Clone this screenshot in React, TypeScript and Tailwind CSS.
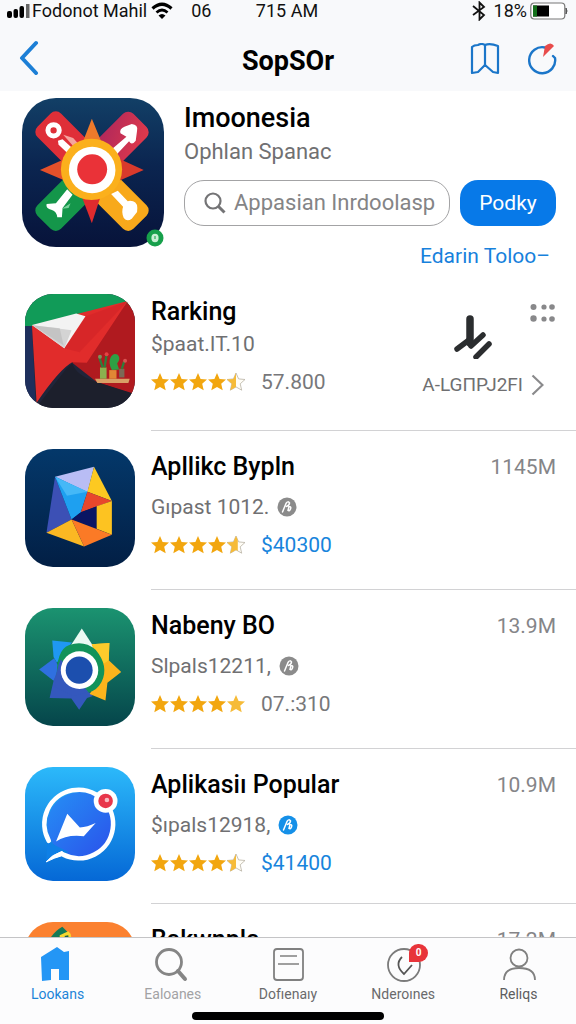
import { useId, useState } from "react";
import type { ReactNode } from "react";
import clsx from "clsx";

type AppEntry = {
  name: string;
  subtitle?: string;
  stars?: number;
  price?: string;
  priceLink?: boolean;
  size?: string;
  badge?: "gray" | "blue";
  tall?: boolean;
  compact?: boolean;
  icon: ReactNode;
};

function HeroIcon() {
  return (
    <svg viewBox="36 24 427 447" preserveAspectRatio="none" className="h-full w-full" aria-hidden="true">
      <defs>
        <linearGradient id="heroBg" x1="0" y1="0" x2="0" y2="1">
          <stop offset="0" stopColor="#123f66" />
          <stop offset="0.45" stopColor="#0b2550" />
          <stop offset="1" stopColor="#07133a" />
        </linearGradient>
        <linearGradient id="heroPink" x1="1" y1="0" x2="0" y2="1">
          <stop offset="0" stopColor="#e23a4a" />
          <stop offset="1" stopColor="#a5245f" />
        </linearGradient>
      </defs>
      <rect x="36" y="24" width="427" height="447" fill="url(#heroBg)" />
      <rect x="-50" y="-100" width="100" height="200" rx="22" transform="translate(173 161) rotate(-45)" fill="#df2f38" />
      <rect x="-50" y="-100" width="100" height="200" rx="22" transform="translate(320 162) rotate(45)" fill="url(#heroPink)" />
      <rect x="-50" y="-100" width="100" height="200" rx="22" transform="translate(173 326) rotate(45)" fill="#14964a" />
      <rect x="-50" y="-100" width="100" height="200" rx="22" transform="translate(320 326) rotate(-45)" fill="#f8a91b" />
      <path d="M246 86L218 158H276Z" fill="#ee7a2b" />
      <path d="M90 240L166 206V272Z" fill="#e4502a" />
      <path d="M402 240L328 206V272Z" fill="#d93a2c" />
      <path d="M246 400L216 320H272Z" fill="#df2b2e" />
      <path d="M144 152L158 148L200 186L186 202L146 164Z" fill="#fff" />
      <path d="M160 134L190 144L214 172L202 182Z" fill="#f5a59f" />
      <circle cx="131" cy="121" r="17" fill="none" stroke="#fff" strokeWidth="15" />
      <path d="M306 178L350 140L332 130Q328 116 344 110L366 102Q386 104 382 122L378 152Q366 168 358 154L322 192Z" fill="#fff" />
      <path d="M172 298L138 340L110 342Q106 356 126 360Q140 364 142 382L156 382L158 354L188 314Z" fill="#fff" />
      <path d="M156 356L182 340L176 354Z" fill="#7cd39d" />
      <path d="M304 312L340 350Q334 366 342 384Q352 396 366 386L382 366Q386 338 370 334Q360 330 354 334L324 302Z" fill="#fff" />
      <circle cx="245" cy="238" r="92" fill="#fbb01c" />
      <circle cx="247" cy="240" r="70" fill="#fff" />
      <circle cx="247" cy="238" r="45" fill="#ea3238" />
    </svg>
  );
}

function FlagIcon() {
  return (
    <svg viewBox="45 25 333 343" preserveAspectRatio="none" className="h-full w-full" aria-hidden="true">
      <rect x="45" y="25" width="333" height="343" fill="#20253a" />
      <path d="M45 25H378V60L66 122H45Z" fill="#119b58" />
      <path d="M45 122H66L78 368H45Z" fill="#1e2f5c" />
      <path d="M356 48L378 58V328L262 290L188 232L240 180Z" fill="#b01a1f" />
      <path d="M188 234Q200 270 262 290L378 326V368H78L170 250Z" fill="#1c1f2c" />
      <path d="M66 120L356 46Q300 130 232 232L188 230Q150 250 80 352Z" fill="#e12c2b" />
      <path d="M230 92L356 46L210 200L164 188Z" fill="#cf2326" opacity="0.55" />
      <path d="M66 118L200 84L228 92L164 188Z" fill="#f3f3f3" />
      <path d="M66 118L186 134L164 188Z" fill="#d4d4d4" />
      <path d="M70 120L150 128L162 180Z" fill="#bdbdbd" opacity="0.7" />
      <path d="M257 280H362L358 293H264Z" fill="#d9a066" />
      <rect x="272" y="246" width="20" height="34" fill="#8bb04e" />
      <rect x="300" y="254" width="22" height="26" fill="#e08735" />
      <rect x="330" y="250" width="16" height="26" fill="#7b6a55" />
      <path d="M280 246L270 216M286 246L292 206M338 250L346 226" stroke="#2f7d3b" strokeWidth="7" />
      <path d="M308 254Q296 232 304 216Q312 200 326 208Q336 220 324 234L330 252Z" fill="#2fa044" />
      <circle cx="292" cy="206" r="6" fill="#e44343" />
      <circle cx="348" cy="226" r="6" fill="#d95151" />
      <circle cx="272" cy="214" r="6" fill="#7d915b" />
    </svg>
  );
}

function PrismIcon() {
  return (
    <svg viewBox="45 22 333 358" preserveAspectRatio="none" className="h-full w-full" aria-hidden="true">
      <defs>
        <linearGradient id="prismBg" x1="0" y1="0" x2="0" y2="1">
          <stop offset="0" stopColor="#04386a" />
          <stop offset="1" stopColor="#021f45" />
        </linearGradient>
      </defs>
      <rect x="45" y="22" width="333" height="358" fill="url(#prismBg)" />
      <path d="M136 106L110 276L186 236Z" fill="#3c50b5" />
      <path d="M136 106L254 76L234 154Z" fill="#b9bdf5" />
      <path d="M136 106L234 152L214 214L186 236Z" fill="#1ea0f0" />
      <path d="M136 106L234 152L172 164Z" fill="#45b8f7" />
      <path d="M254 76L308 180L234 152Z" fill="#fdc921" />
      <path d="M234 152L308 180L214 214Z" fill="#e8472c" />
      <path d="M214 214L262 196V264L186 236Z" fill="#0a1563" />
      <path d="M262 196L308 180V282L262 264Z" fill="#fdc321" />
      <path d="M110 276L186 236L224 318Z" fill="#fbb823" />
      <path d="M186 236L308 282L224 318Z" fill="#fb7a26" />
    </svg>
  );
}

function SunIcon() {
  return (
    <svg viewBox="43 24 335 357" preserveAspectRatio="none" className="h-full w-full" aria-hidden="true">
      <defs>
        <linearGradient id="sunBg" x1="0" y1="0" x2="0" y2="1">
          <stop offset="0" stopColor="#1b9370" />
          <stop offset="1" stopColor="#05454b" />
        </linearGradient>
      </defs>
      <rect x="43" y="24" width="335" height="357" fill="url(#sunBg)" />
      <path d="M216 86L178 144H254Z" fill="#eafaf3" />
      <path d="M126 122L186 128L140 190L130 172Z" fill="#1f98f2" />
      <path d="M132 176L86 210L130 244L150 210Z" fill="#2f70e0" />
      <path d="M130 244L150 190L250 290L232 296L208 332L184 298L118 296Z" fill="#3458bd" />
      <path d="M246 134L300 130L298 182L336 218L294 250L288 304L240 284L278 220Z" fill="#fbb41c" />
      <path d="M246 134L300 130L298 182L284 192Z" fill="#fccb2c" />
      <path d="M140 244Q136 150 178 136Q222 120 258 150Q300 200 276 248Q262 274 236 280L160 250Z" fill="#12935a" />
      <path d="M134 262Q140 200 152 180L236 278L190 290Z" fill="#3458bd" />
      <circle cx="209" cy="212" r="57" fill="#fff" />
      <circle cx="208" cy="212" r="41" fill="#1c4fae" />
    </svg>
  );
}

function MessengerIcon() {
  return (
    <svg viewBox="44 22 333 346" preserveAspectRatio="none" className="h-full w-full" aria-hidden="true">
      <defs>
        <linearGradient id="msgBg" x1="0" y1="0" x2="0" y2="1">
          <stop offset="0" stopColor="#2cb9fa" />
          <stop offset="1" stopColor="#0568d6" />
        </linearGradient>
        <linearGradient id="msgDisc" x1="0" y1="0" x2="1" y2="1">
          <stop offset="0" stopColor="#2590f5" />
          <stop offset="1" stopColor="#2b50ea" />
        </linearGradient>
      </defs>
      <rect x="44" y="22" width="333" height="346" fill="url(#msgBg)" />
      <circle cx="211" cy="198" r="100" fill="url(#msgDisc)" />
      <path d="M112 248L176 280L108 310Z" fill="#0f80e6" />
      <path d="M116 246A104 104 0 1 1 160 288" fill="none" stroke="#fff" strokeWidth="14" strokeLinecap="round" />
      <path d="M108 310Q126 288 156 278L166 288Q130 298 108 310Z" fill="#fff" stroke="#fff" strokeWidth="3" />
      <path d="M172 164L210 206Q232 204 258 192L222 232Q170 226 138 248Z" fill="#fff" />
      <circle cx="288" cy="125" r="36" fill="#fff" />
      <circle cx="288" cy="125" r="22" fill="#e8364b" />
      <circle cx="292" cy="122" r="7" fill="#f9b9c0" />
    </svg>
  );
}

function OrangeIcon() {
  return (
    <svg viewBox="75 66 333 343" preserveAspectRatio="none" className="h-full w-full" aria-hidden="true">
      <rect x="75" y="66" width="333" height="343" fill="#fb8130" />
      <path d="M152 114Q166 92 188 80L206 98L180 130H150Z" fill="#147a55" />
      <path d="M180 106L206 94Q220 104 212 130H180Z" fill="#f7d72f" />
      <path d="M194 108L206 106L208 124Z" fill="#1a5f48" />
    </svg>
  );
}

const STAR = "M9 0L11.6 5.9L18 6.500L13.200 10.800L14.700 17.200L9 13.900L3.300 17.200L4.800 10.800L0 6.500L6.400 5.900Z";

function Stars({ value }: { value: number }) {
  const id = useId();
  return (
    <span className="flex gap-px" role="img" aria-label={`${value} out of 5`}>
      {[0, 1, 2, 3, 4].map((i) => {
        const fill = Math.max(0, Math.min(1, value - i));
        return (
          <svg key={i} width="18" height="18" viewBox="0 0 18 18">
            <clipPath id={`${id}-${i}`}>
              <rect width={18 * fill} height="18" />
            </clipPath>
            {fill < 1 ? (
              <path d={STAR} fill="#fffdf6" stroke="#b9b3a5" strokeWidth="0.8" />
            ) : null}
            <path d={STAR} fill={i === 4 ? "#f6bb38" : "#f2a60f"} clipPath={`url(#${id}-${i})`} />
          </svg>
        );
      })}
    </span>
  );
}

function Badge({ tone }: { tone: "gray" | "blue" }) {
  return (
    <svg width="20" height="20" viewBox="0 0 20 20" aria-hidden="true">
      <circle cx="10" cy="10" r="9.500" fill={tone === "blue" ? "#1590e8" : "#8b8b8b"} />
      <path
        d="M5.500 15L9 6.500Q11 3.500 12.500 6Q12.500 8 9.500 9.500M12 9.500Q14.500 9.500 13.500 12Q12.500 14.500 11 13.500L12 9.500"
        fill="none"
        stroke="#fff"
        strokeWidth="1.500"
        strokeLinecap="round"
      />
    </svg>
  );
}

const APPS: AppEntry[] = [
  { name: "Rarking", subtitle: "$paat.IT.10", stars: 4.5, price: "57.800", compact: true, icon: <FlagIcon /> },
  { name: "Apllikc Bypln", subtitle: "Gıpast 1012.", stars: 4.6, price: "$40300", priceLink: true, size: "1145M", badge: "gray", tall: true, icon: <PrismIcon /> },
  { name: "Nabeny BO", subtitle: "Slpals12211,", stars: 5, price: "07.:310", size: "13.9M", badge: "gray", tall: true, icon: <SunIcon /> },
  { name: "Aplikasiı Popular", subtitle: "$ıpals12918,", stars: 4.5, price: "$41400", priceLink: true, size: "10.9M", badge: "blue", icon: <MessengerIcon /> },
  { name: "Bakwnpla", size: "17.2M", icon: <OrangeIcon /> },
];

function AppRow({ app }: { app: AppEntry }) {
  return (
    <li className="flex gap-4 pl-[25px]">
      <div className={clsx("mt-[18px] mb-[23px] w-[110px] shrink-0 overflow-hidden rounded-[28px]", app.tall ? "h-[118px]" : "h-[114px]")}>
        {app.icon}
      </div>
      <div className="flex min-w-0 flex-1 justify-between border-b border-[#d2d2d4] pt-[18px] pr-5">
        <div>
          <h2 className="text-[25px] leading-9 font-medium whitespace-nowrap text-black">{app.name}</h2>
          {app.subtitle ? (
            <p className={clsx("flex items-center gap-2 text-[21px] leading-7 whitespace-nowrap text-[#707072]", !app.compact && "mt-2")}>
              {app.subtitle}
              {app.badge ? <Badge tone={app.badge} /> : null}
            </p>
          ) : null}
          {app.stars ? (
            <p className="mt-[10px] flex items-center gap-4 text-[21px] leading-7">
              <Stars value={app.stars} />
              <span className={app.priceLink ? "text-[#1784dc]" : "text-[#77777a]"}>{app.price}</span>
            </p>
          ) : null}
        </div>
        {app.size ? (
          <span className="text-[21px] leading-9 text-[#858588]">{app.size}</span>
        ) : (
          <div className="flex flex-col items-end">
            <button type="button" aria-label="More" className="mt-[9px]">
              <svg width="26" height="20" viewBox="0 0 26 20" fill="#88888a">
                <circle cx="3.500" cy="4" r="3" />
                <circle cx="14" cy="4" r="2.600" />
                <circle cx="22" cy="4" r="2.800" />
                <circle cx="3.500" cy="15.500" r="3.200" />
                <circle cx="14" cy="16" r="2.600" />
                <circle cx="22" cy="16" r="2.800" />
              </svg>
            </button>
            <svg width="38" height="44" viewBox="0 0 38 44" className="-mt-2 mr-16" fill="none" stroke="#2b2d2f" aria-hidden="true">
              <path d="M16 4V28" strokeWidth="7.500" strokeLinecap="round" />
              <path d="M3 34L15 25M17 31L29 20" strokeWidth="5.500" strokeLinecap="round" />
              <path d="M22 42L35 29" strokeWidth="5.500" strokeLinecap="round" />
            </svg>
            <a href="#rank" className="mt-3 mr-3 flex items-center gap-2 text-[19px] leading-7 text-[#6f6f71]">
              A-LGΠPJ2FI
              <svg width="13" height="22" viewBox="0 0 13 22" fill="none" stroke="#8a8a8c" strokeWidth="2.200" aria-hidden="true">
                <path d="M1.500 1.500L11.500 11L1.500 20.500" />
              </svg>
            </a>
          </div>
        )}
      </div>
    </li>
  );
}

const TABS: { label: string; icon: ReactNode; tone: string; alert?: boolean }[] = [
  {
    label: "Lookans",
    tone: "text-[#1d84d8]",
    icon: <path d="M2 11L18 1L25 6L30 5V34H20V23H12V34L3 35Z" fill="#2496f5" />,
  },
  {
    label: "Ealoanes",
    tone: "text-[#a2a2a4]",
    icon: (
      <g fill="none" stroke="#858585">
        <circle cx="15" cy="16" r="12.500" strokeWidth="2.800" />
        <path d="M24 25L31 33" strokeWidth="4" strokeLinecap="round" />
      </g>
    ),
  },
  {
    label: "Dofıenaıy",
    tone: "text-[#6a6a6c]",
    icon: (
      <g fill="none" stroke="#808080" strokeWidth="1.800">
        <rect x="5" y="3" width="29" height="31" rx="3" />
        <path d="M11 10H28M9 18H30" strokeWidth="1.500" />
      </g>
    ),
  },
  {
    label: "Nderoınes",
    tone: "text-[#6a6a6c]",
    alert: true,
    icon: (
      <g fill="none" stroke="#7b7b7b" strokeWidth="1.800">
        <circle cx="20" cy="19" r="16" />
        <path d="M18 11Q10 19 20 28L28 19" stroke="#555" />
      </g>
    ),
  },
  {
    label: "Reliqs",
    tone: "text-[#5d5d5f]",
    icon: (
      <g fill="none" stroke="#808080" strokeWidth="1.800">
        <circle cx="20" cy="12" r="8.500" />
        <path d="M5 34Q5 22 20 22Q36 22 36 34" />
      </g>
    ),
  },
];

function StatusBar() {
  return (
    <div className="flex h-[22px] items-center pr-2 pl-[6px] text-[18px] leading-[22px] text-[#111]">
      <div className="flex flex-1 items-center">
        <svg width="25" height="16" viewBox="0 0 25 16" aria-hidden="true">
          <rect x="1" y="8" width="5" height="7" rx="2" />
          <rect x="7.500" y="6" width="4.500" height="9" rx="2" />
          <rect x="13.500" y="3" width="4.500" height="12" rx="2" />
          <rect x="20" y="1" width="3.500" height="14" fill="#666" />
        </svg>
        <span className="pl-px whitespace-nowrap">Fodonot Mahil</span>
        <svg width="22" height="18" viewBox="0 0 22 18" className="ml-1" fill="none" stroke="#000" aria-hidden="true">
          <path d="M1.500 6.500Q11 -2 20.500 6.500" strokeWidth="3.200" />
          <path d="M5.500 10.500Q11 5.500 16.500 10.500" strokeWidth="2.800" />
          <path d="M11 17L7.500 13.500Q11 10.500 14.500 13.500Z" fill="#000" stroke="none" />
        </svg>
        <span className="ml-[18px]">06</span>
      </div>
      <time>715 AM</time>
      <div className="flex flex-1 items-center justify-end">
        <svg width="14" height="20" viewBox="0 0 14 20" fill="none" stroke="#111" strokeWidth="1.800" aria-hidden="true">
          <path d="M1 5L12 14L7.500 18.500V1.500L12 6L1 14" />
        </svg>
        <span className="ml-2">18%</span>
        <svg width="38" height="18" viewBox="0 0 38 18" className="ml-[3px]" aria-hidden="true">
          <rect x="0.800" y="1" width="34" height="16" rx="3.500" fill="#fff" stroke="#777" strokeWidth="1.200" />
          <rect x="3" y="3.500" width="16" height="11" fill="#000" />
          <rect x="3" y="3.500" width="4" height="11" fill="#13701b" />
          <path d="M36 6Q38 9 36 12Z" fill="#555" stroke="#555" />
        </svg>
      </div>
    </div>
  );
}

export default function App() {
  const [query, setQuery] = useState("");

  return (
    <div className="flex h-screen flex-col overflow-hidden bg-white font-['Roboto','Liberation_Sans',sans-serif]">
      <header className="bg-[#f8f9fb]">
        <StatusBar />
        <div className="flex h-[69px] items-center px-[18px]">
          <div className="flex flex-1">
            <button type="button" aria-label="Back">
              <svg width="22" height="36" viewBox="0 0 22 36" fill="none" stroke="#1c7fd6" strokeWidth="4" strokeLinecap="round" strokeLinejoin="round">
                <path d="M18 4L4 19L18 34" />
              </svg>
            </button>
          </div>
          <h1 className="pt-2 text-[27px] leading-8 font-bold text-black">SopSOr</h1>
          <div className="flex flex-1 justify-end gap-7 pt-1">
            <button type="button" aria-label="Bookmarks">
              <svg width="30" height="32" viewBox="0 0 30 32" fill="none" stroke="#1b76c9" strokeWidth="2.200" strokeLinejoin="round">
                <path d="M2 4Q4 2 8 2Q12 0 15 2Q20 0 28 3V30L23 29L15 22L8 29L2 30Z" />
                <path d="M15 2V22" />
              </svg>
            </button>
            <button type="button" aria-label="Refresh">
              <svg width="30" height="32" viewBox="0 0 30 32" fill="none">
                <path d="M17 4.500A13 13 0 1 0 27 15L25 13" stroke="#1b76c9" strokeWidth="2.400" strokeLinecap="round" />
                <path d="M15 14L17 3Q23 -2 26 3Z" fill="#e84b4b" />
              </svg>
            </button>
          </div>
        </div>
      </header>

      <main className="min-h-0 flex-1 overflow-hidden">
        <section className="flex gap-5 pt-[7px] pr-5 pb-[6px] pl-[22px]">
          <div className="relative h-[149px] w-[142px] shrink-0">
            <div className="h-full w-full overflow-hidden rounded-[34px]">
              <HeroIcon />
            </div>
            <svg width="18" height="18" viewBox="0 0 18 18" className="absolute right-0 bottom-0" aria-hidden="true">
              <circle cx="9" cy="9" r="8.500" fill="#17a04b" />
              <ellipse cx="9" cy="9" rx="3.600" ry="4.200" fill="#c9efd4" />
              <path d="M9 7V10" stroke="#4cb873" strokeWidth="1.500" />
            </svg>
          </div>
          <div className="flex min-w-0 flex-1 flex-col">
            <h2 className="pt-0.5 text-[27px] leading-9 font-medium text-black">Imoonesia</h2>
            <p className="text-[22px] leading-8 text-[#707072]">Ophlan Spanac</p>
            <form className="mt-3 flex gap-[10px]" onSubmit={(e) => e.preventDefault()}>
              <label className="flex h-[46px] min-w-0 flex-1 items-center gap-2 rounded-[20px] border border-[#a3a3a5] pr-3 pl-[19px]">
                <svg width="22" height="22" viewBox="0 0 22 22" fill="none" stroke="#747476" className="shrink-0" aria-hidden="true">
                  <circle cx="9" cy="9" r="7.500" strokeWidth="2.200" />
                  <path d="M14.500 14.500L20.500 20.500" strokeWidth="3" />
                </svg>
                <input
                  type="text"
                  aria-label="Search apps"
                  value={query}
                  onChange={(e) => setQuery(e.target.value)}
                  placeholder="Appasian Inrdoolasp"
                  className="w-full min-w-0 bg-transparent text-[22px] leading-7 text-black outline-none placeholder:text-[#848486]"
                />
              </label>
              <button type="submit" className="h-[46px] w-24 rounded-[18px] bg-[#0779e8] text-[21px] leading-7 text-white">
                Podky
              </button>
            </form>
            <a href="#more" className="mt-4 self-end pr-[6px] text-[21px] leading-7 text-[#1781dc]">
              Edarin Toloo–
            </a>
          </div>
        </section>

        <ul>
          {APPS.map((app) => (
            <AppRow key={app.name} app={app} />
          ))}
        </ul>
      </main>

      <nav className="border-t border-[#c4c4c6] bg-[#fcfcfd]">
        <div className="flex pt-2">
          {TABS.map((tab) => (
            <a key={tab.label} href="#tab" className={clsx("flex flex-1 flex-col items-center text-[14px] leading-5", tab.tone)}>
              <span className="relative">
                <svg width="38" height="38" viewBox="0 0 38 38" aria-hidden="true">
                  {tab.icon}
                </svg>
                {tab.alert ? (
                  <span className="absolute -top-0.5 -right-1.5 flex h-[18px] w-[19px] items-center justify-center rounded-full rounded-bl-none bg-[#e8343a] text-[10px] leading-none font-bold text-white">
                    0
                  </span>
                ) : null}
              </span>
              {tab.label}
            </a>
          ))}
        </div>
        <div className="mx-auto mt-2 mb-1 h-2 w-1/3 rounded-full bg-black" />
      </nav>
    </div>
  );
}
